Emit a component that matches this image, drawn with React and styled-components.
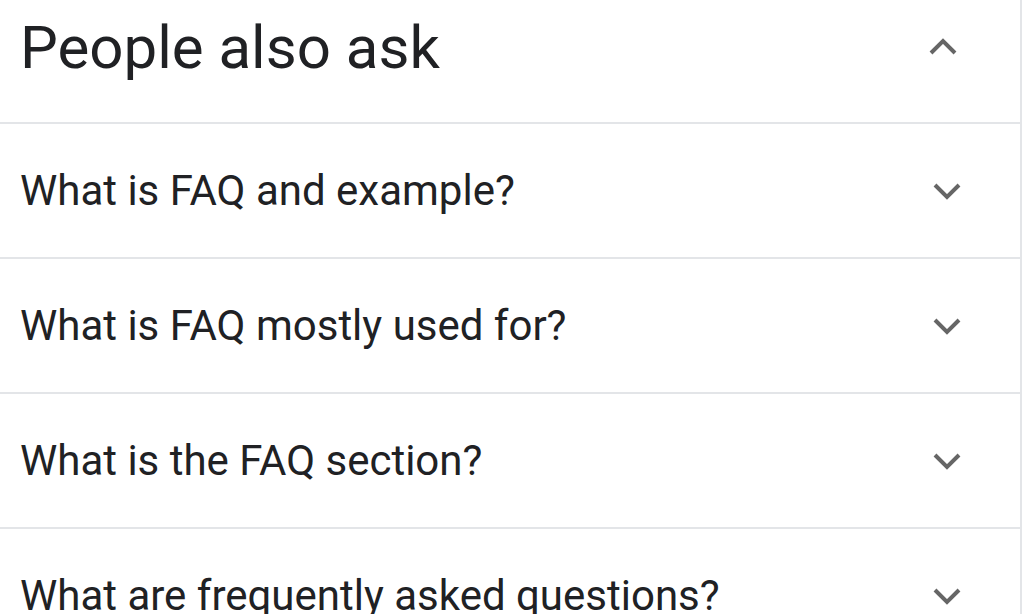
import React from "react";
import styled, { createGlobalStyle } from "styled-components";

const questions = [
    "What is FAQ and example?",
    "What is FAQ mostly used for?",
    "What is the FAQ section?",
    "What are frequently asked questions?",
];

const Chevron = ({ up }) => (
    <ChevronSvg viewBox="0 0 30 18" $up={up}>
        <polyline
            points="3,3 15,15 27,3"
            fill="none"
            stroke="#666"
            strokeWidth="4"
        />
    </ChevronSvg>
);

const App = () => {
    return (
        <>
            <GlobalStyle />
            <Panel>
                <Header>
                    <Title>People also ask</Title>
                    <Chevron up />
                </Header>
                {questions.map((q) => (
                    <Row key={q}>
                        <Question>{q}</Question>
                        <Chevron />
                    </Row>
                ))}
            </Panel>
        </>
    );
};

export default App;

const GlobalStyle = createGlobalStyle`
    html, body {
        margin: 0;
        padding: 0;
        background: #fff;
        overflow: hidden;
    }
    body {
        font-family: Roboto, "Liberation Sans", sans-serif;
        color: #202124;
    }
`;
const Panel = styled.div`
    width: 1020px;
    height: 614px;
    overflow: hidden;
    border-right: 2px solid #e3e5e8;
    display: flex;
    flex-direction: column;
`;
const Header = styled.div`
    flex: none;
    height: 124px;
    box-sizing: border-box;
    border-bottom: 2px solid #e3e5e8;
    display: flex;
    align-items: center;
    justify-content: space-between;
    padding: 0 62px 28px 20px;
`;
const Title = styled.h2`
    margin: 0;
    font-size: 60px;
    font-weight: 400;
    color: #202124;
`;
const Row = styled.div`
    flex: none;
    height: 135px;
    box-sizing: border-box;
    border-bottom: 2px solid #e3e5e8;
    display: flex;
    align-items: center;
    justify-content: space-between;
    padding: 0 58px 0 20px;
`;
const Question = styled.span`
    font-size: 42px;
    color: #202124;
`;
const ChevronSvg = styled.svg`
    flex: none;
    width: 30px;
    height: 18px;
    transform: ${(p) => (p.$up ? "rotate(180deg)" : "none")};
`;
